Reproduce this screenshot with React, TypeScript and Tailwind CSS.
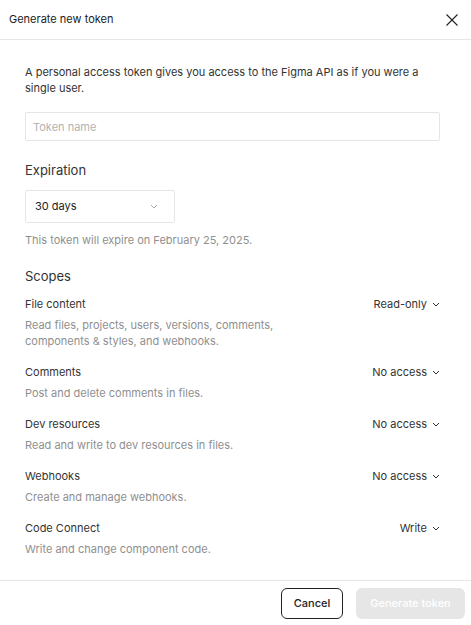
import React from "react";

const SCOPES = [
  { name: "File content", value: "Read-only", desc: ["Read files, projects, users, versions, comments,", "components & styles, and webhooks."] },
  { name: "Comments", value: "No access", desc: ["Post and delete comments in files."] },
  { name: "Dev resources", value: "No access", desc: ["Read and write to dev resources in files."] },
  { name: "Webhooks", value: "No access", desc: ["Create and manage webhooks."] },
  { name: "Code Connect", value: "Write", desc: ["Write and change component code."] },
];

function Chevron({ className = "" }: { className?: string }) {
  return (
    <svg width="8" height="5" viewBox="0 0 8 5" fill="none" className={className}>
      <path d="M1 1L4 4L7 1" stroke="currentColor" strokeWidth="1" />
    </svg>
  );
}

export default function App() {
  return (
    <div
      className="flex h-[625px] w-[471px] flex-col bg-white text-[11px] text-[#333]"
      style={{ fontFamily: "Inter, 'Noto Sans', sans-serif" }}
    >
      {/* Header */}
      <div className="flex h-[40px] shrink-0 items-center justify-between border-b border-[#e6e6e6] pl-[9px] pr-[13px]">
        <span className="text-[11px] text-[#222]">Generate new token</span>
        <svg width="12" height="12" viewBox="0 0 12 12" fill="none">
          <path d="M0.5 0.5L11.5 11.5M11.5 0.5L0.5 11.5" stroke="#222" strokeWidth="1.1" />
        </svg>
      </div>

      {/* Body */}
      <div className="flex-1 overflow-hidden pl-[25px] pr-[31px] pt-[24px]">
        <p className="text-[11px] leading-[16px] text-[#333]">
          A personal access token gives you access to the Figma API as if you were a single user.
        </p>

        <input
          placeholder="Token name"
          className="mt-[16px] h-[29px] w-full rounded-[2px] border border-[#e6e6e6] px-[7px] text-[11px] outline-none placeholder:text-[#b3b3b3]"
        />

        <div className="mt-[19px] text-[13px] leading-[20px] text-[#333]">Expiration</div>
        <div className="mt-[10px] flex h-[33px] w-[150px] items-center justify-between rounded-[2px] border border-[#e6e6e6] pl-[9px] pr-[16px]">
          <span className="text-[11px] text-[#222]">30 days</span>
          <Chevron className="text-[#aaa]" />
        </div>
        <p className="mt-[9px] leading-[16px] text-[#8f8f8f]">This token will expire on February 25, 2025.</p>

        <div className="mt-[18px] text-[13px] leading-[20px] text-[#333]">Scopes</div>
        <div className="mt-[10px] flex flex-col gap-[15px]">
          {SCOPES.map((s) => (
            <div key={s.name}>
              <div className="flex items-center justify-between leading-[16px]">
                <span className="text-[#333]">{s.name}</span>
                <span className="flex items-center gap-[5px] text-[#333]">
                  {s.value}
                  <Chevron className="text-[#333]" />
                </span>
              </div>
              <div className="mt-[5px] leading-[16px] text-[#8f8f8f]">
                {s.desc.map((d) => (
                  <div key={d}>{d}</div>
                ))}
              </div>
            </div>
          ))}
        </div>
      </div>

      {/* Footer */}
      <div className="flex h-[45px] shrink-0 items-center justify-end gap-[13px] border-t border-[#e6e6e6] pr-[6px]">
        <button className="h-[31px] w-[62px] rounded-[6px] border border-[#222] text-[11px] font-medium text-[#222]">
          Cancel
        </button>
        <button className="h-[31px] w-[109px] rounded-[6px] bg-[#e6e6e6] text-[11px] font-medium text-white">
          Generate token
        </button>
      </div>
    </div>
  );
}
